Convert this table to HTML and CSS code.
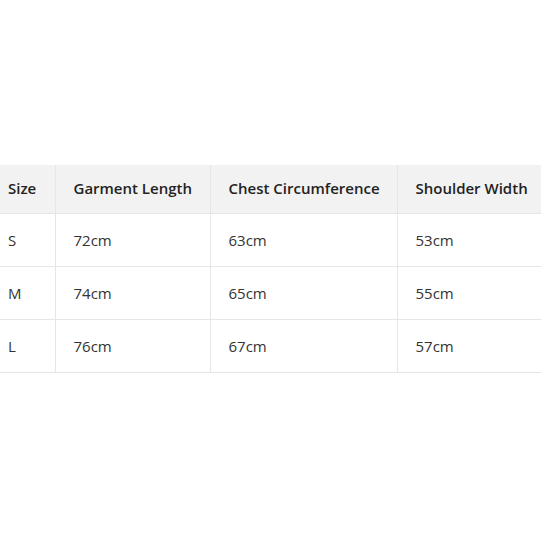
FILE: index.html
```html
<!DOCTYPE html>
<html>
<head>
<meta charset="utf-8">
<link rel="stylesheet" href="styles.css">
</head>
<body>
<div class="wrap">
<table class="size-table">
<colgroup>
<col class="c1"><col class="c2"><col class="c3"><col class="c4">
</colgroup>
<thead>
<tr><th>Size</th><th>Garment Length</th><th>Chest Circumference</th><th>Shoulder Width</th></tr>
</thead>
<tbody>
<tr><td>S</td><td>72cm</td><td>63cm</td><td>53cm</td></tr>
<tr><td>M</td><td>74cm</td><td>65cm</td><td>55cm</td></tr>
<tr><td>L</td><td>76cm</td><td>67cm</td><td>57cm</td></tr>
</tbody>
</table>
</div>
</body>
</html>
```
FILE: styles.css
```css
html, body {
  margin: 0;
  padding: 0;
  background: #fff;
  overflow: hidden;
}
.wrap {
  padding-top: 165px;
  margin-left: -10px;
  width: 551px;
}
.size-table {
  border-collapse: collapse;
  table-layout: fixed;
  width: 551px;
  font-family: "Open Sans", "Noto Sans", sans-serif;
  font-size: 15px;
  color: #333;
}
.c1 { width: 65px; }
.c2 { width: 155px; }
.c3 { width: 187px; }
.c4 { width: 144px; }
.size-table th,
.size-table td {
  text-align: left;
  padding: 0 0 0 18px;
  border: 1px solid #e6e6e6;
  white-space: nowrap;
}
.size-table th {
  background: #f2f2f2;
  height: 45px;
  padding-bottom: 3px;
  font-weight: 600;
  color: #222;
  border-top: none;
  border-right: none;
}
.size-table td {
  height: 52px;
  border-right: none;
}
.size-table th:first-child,
.size-table td:first-child {
  border-left: none;
}
.size-table th + th,
.size-table td + td {
  border-left: 1px solid #e6e6e6;
}
```
